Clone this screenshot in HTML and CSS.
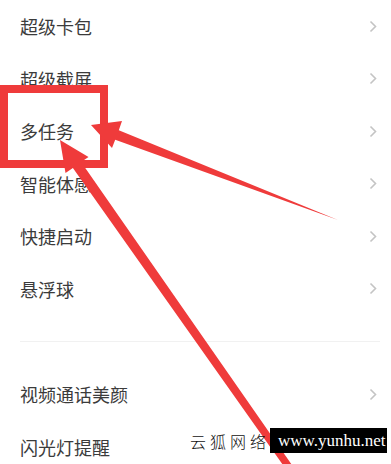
FILE: index.html
```html
<!DOCTYPE html>
<html lang="zh-CN">
<head>
    <meta charset="UTF-8">
    <meta name="viewport" content="width=device-width, initial-scale=1.0">
    <title>多任务</title>
    <link rel="stylesheet" href="styles.css">
</head>
<body>
    <div class="page">
        <ul class="group">
            <li class="row"><span>超级卡包</span><svg class="arrow" viewBox="0 0 8 13"><path d="M1.5 1.5 L6.5 6.5 L1.5 11.5"/></svg></li>
            <li class="row"><span>超级截屏</span><svg class="arrow" viewBox="0 0 8 13"><path d="M1.5 1.5 L6.5 6.5 L1.5 11.5"/></svg></li>
            <li class="row"><span>多任务</span><svg class="arrow" viewBox="0 0 8 13"><path d="M1.5 1.5 L6.5 6.5 L1.5 11.5"/></svg></li>
            <li class="row"><span>智能体感</span><svg class="arrow" viewBox="0 0 8 13"><path d="M1.5 1.5 L6.5 6.5 L1.5 11.5"/></svg></li>
            <li class="row"><span>快捷启动</span><svg class="arrow" viewBox="0 0 8 13"><path d="M1.5 1.5 L6.5 6.5 L1.5 11.5"/></svg></li>
            <li class="row"><span>悬浮球</span><svg class="arrow" viewBox="0 0 8 13"><path d="M1.5 1.5 L6.5 6.5 L1.5 11.5"/></svg></li>
        </ul>
        <div class="divider"></div>
        <ul class="group">
            <li class="row"><span>视频通话美颜</span><svg class="arrow" viewBox="0 0 8 13"><path d="M1.5 1.5 L6.5 6.5 L1.5 11.5"/></svg></li>
            <li class="row"><span>闪光灯提醒</span><svg class="arrow" viewBox="0 0 8 13"><path d="M1.5 1.5 L6.5 6.5 L1.5 11.5"/></svg></li>
        </ul>

        <!-- red marks drawn over the screenshot -->
        <svg class="marks" viewBox="0 0 391 464">
            <rect x="4" y="89" width="100" height="75" fill="none" stroke="#ef3b3b" stroke-width="8"/>
            <polygon fill="#ef3b3b" points="91,125 122,121 118.8,130.3 338,220 115.2,139.7 112,148"/>
            <polygon fill="#ef3b3b" points="60,140 88.5,157 81.1,162.1 301,478 295,482 72.9,167.9 65.5,173"/>
        </svg>

        <div class="watermark">
            <span class="wm-name">云狐网络</span>
            <span class="wm-site">www.yunhu.net</span>
        </div>
    </div>
</body>
</html>
```

FILE: styles.css
```css
body {
    margin: 0;
    padding: 0;
    background-color: #ffffff;
    font-family: "Noto Sans CJK SC", "Noto Sans", sans-serif;
}
.page {
    position: relative;
    width: 391px;
    height: 464px;
    overflow: hidden;
}
.group {
    list-style: none;
    margin: 0;
    padding: 0;
}
.row {
    height: 52.5px;
    display: flex;
    align-items: center;
    justify-content: space-between;
    padding: 0 14px 0 20px;
    font-size: 18px;
    color: #3b3b3b;
}
.arrow {
    width: 8px;
    height: 13px;
}
.arrow path {
    fill: none;
    stroke: #c4c4c4;
    stroke-width: 1.6;
}
.divider {
    height: 1px;
    margin: 26px 11px 26px 20px;
    background-color: #f1f1f1;
}
.marks {
    position: absolute;
    top: 0;
    left: 0;
    width: 391px;
    height: 464px;
}
.watermark {
    position: absolute;
    top: 428px;
    right: 4px;
    display: flex;
    align-items: center;
    height: 25px;
}
.wm-name {
    font-size: 16px;
    letter-spacing: 4px;
    color: #111111;
    font-weight: 300;
}
.wm-site {
    height: 25px;
    line-height: 25px;
    padding: 0 0 0 8px;
    width: 109px;
    background-color: #000000;
    color: #ffffff;
    font-family: "Liberation Serif", serif;
    font-size: 17px;
}
```
